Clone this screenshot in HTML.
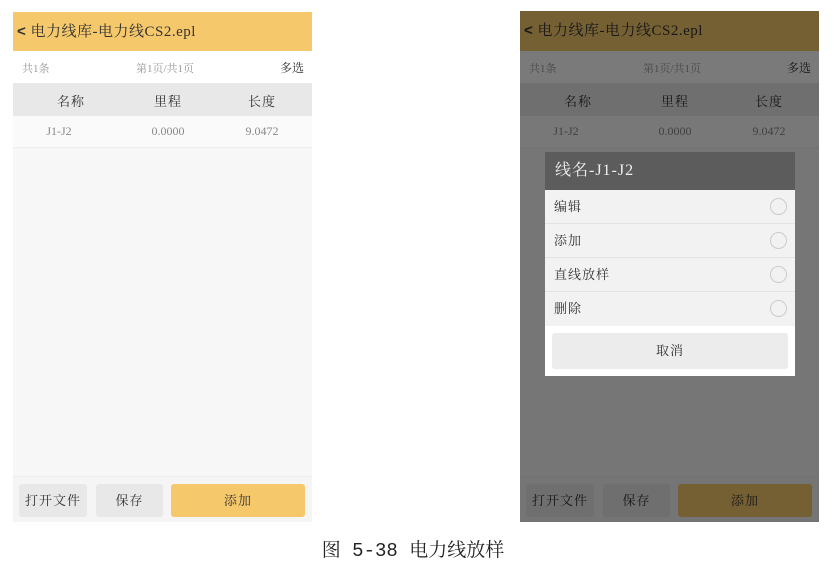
<!DOCTYPE html><html><head><meta charset="utf-8"><style>
*{margin:0;padding:0;box-sizing:border-box}
body{width:840px;height:567px;background:#fff;position:relative;overflow:hidden;font-family:"Liberation Serif","Noto Serif CJK SC",serif;color:#333}
.ph{position:absolute;top:12px;width:299px;height:510px;background:#f7f7f7;overflow:hidden}
.hd{height:39px;background:#f5c86b;font-size:15px;line-height:39px;padding-left:4px;color:#333;letter-spacing:0.5px}
.hd b{font-weight:bold;font-family:"Liberation Sans",sans-serif;font-size:15px}
.info{height:32px;background:#fff;font-size:11px;color:#999;position:relative}
.info span{position:absolute;top:9px}
.th{height:33px;background:#e8e8e8;font-size:13px;position:relative;letter-spacing:1px}
.row{height:32px;background:#fafafa;font-size:12px;color:#888;position:relative;border-bottom:1px solid #eee}
.th span,.row span{position:absolute;top:8px;transform:translateX(-50%)}
.bot{position:absolute;left:0;right:0;top:464px;height:46px;background:#f5f5f5;border-top:1px solid #eee}
.btn{position:absolute;top:7px;height:33px;border-radius:3px;background:#e8e8e8;font-size:13px;text-align:center;line-height:33px;letter-spacing:1px}
.ov{position:absolute;inset:0;background:rgba(0,0,0,0.52)}
.it{height:34px;border-bottom:1px solid #e2e2e2;font-size:13px;line-height:34px;padding-left:9px;position:relative;letter-spacing:1px}
.it i{position:absolute;right:8px;top:8px;width:17px;height:17px;border:1px solid #ccc;border-radius:50%}
</style></head><body>
<div class="ph" style="left:13px">
<div class="hd"><b>&lt;</b> 电力线库-电力线CS2.epl</div>
<div class="info"><span style="left:9px">共1条</span><span style="left:123px">第1页/共1页</span><span style="right:8px;color:#333;font-size:12px;top:8px">多选</span></div>
<div class="th"><span style="left:58px">名称</span><span style="left:155px">里程</span><span style="left:249px">长度</span></div>
<div class="row"><span style="left:46px">J1-J2</span><span style="left:155px">0.0000</span><span style="left:249px">9.0472</span></div>
<div class="bot"><div class="btn" style="left:6px;width:68px">打开文件</div><div class="btn" style="left:83px;width:67px">保存</div><div class="btn" style="left:158px;width:134px;background:#f5c86b">添加</div></div>
</div>
<div class="ph" style="left:520px;top:11px;height:511px">
<div class="hd" style="height:40px;line-height:40px"><b>&lt;</b> 电力线库-电力线CS2.epl</div>
<div class="info"><span style="left:9px">共1条</span><span style="left:123px">第1页/共1页</span><span style="right:8px;color:#333;font-size:12px;top:8px">多选</span></div>
<div class="th"><span style="left:58px">名称</span><span style="left:155px">里程</span><span style="left:249px">长度</span></div>
<div class="row"><span style="left:46px">J1-J2</span><span style="left:155px">0.0000</span><span style="left:249px">9.0472</span></div>
<div class="bot" style="top:465px"><div class="btn" style="left:6px;width:68px">打开文件</div><div class="btn" style="left:83px;width:67px">保存</div><div class="btn" style="left:158px;width:134px;background:#f5c86b">添加</div></div>
<div class="ov"></div>
</div>
<div style="position:absolute;left:545px;top:152px;width:250px;height:224px;background:#fff">
<div style="height:38px;background:#5c5c5c;color:#f0f0f0;font-size:16px;line-height:38px;padding-left:10px;letter-spacing:1px">线名-J1-J2</div>
<div style="background:#f2f2f2">
<div class="it">编辑<i></i></div>
<div class="it">添加<i></i></div>
<div class="it">直线放样<i></i></div>
<div class="it" style="border:0">删除<i></i></div>
</div>
<div style="position:absolute;left:7px;top:181px;width:236px;height:36px;background:#ececec;border-radius:3px;text-align:center;line-height:36px;font-size:13px;letter-spacing:1px">取消</div>
</div>
<div style="position:absolute;left:0;width:826px;top:535px;text-align:center;font-size:19px;color:#222;font-family:'Liberation Mono','Noto Serif CJK SC',monospace">图 5-38 电力线放样</div>
</body></html>
